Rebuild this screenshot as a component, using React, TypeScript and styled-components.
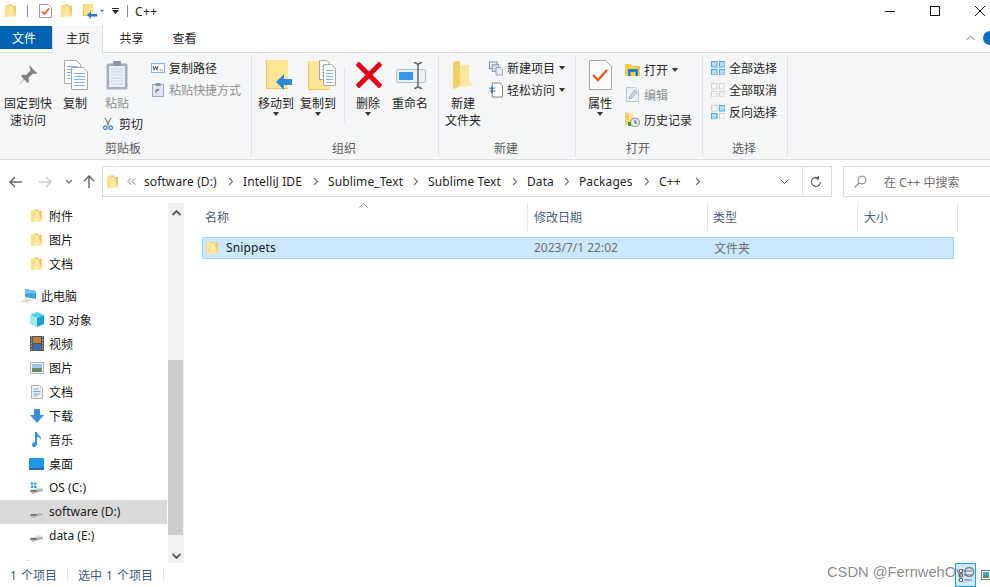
import React from "react";
import styled, { createGlobalStyle } from "styled-components";

const Global = createGlobalStyle`
  html, body { margin: 0; padding: 0; background: #fff; }
  body { font-family: "Noto Sans", "Noto Sans CJK SC", sans-serif; font-size: 12px; color: #1a1a1a; }
`;

const Page = styled.div`
  position: relative;
  width: 990px;
  height: 587px;
  overflow: hidden;
  display: flex;
  flex-direction: column;
  background: #fff;
`;

/* ---------- title bar ---------- */
const TitleBar = styled.div`
  height: 26px;
  flex: none;
  display: flex;
  align-items: center;
  padding: 0 5px 4px;
  box-sizing: border-box;
`;
const QuickSep = styled.span<{ $ml?: number }>`
  width: 1px;
  height: 12px;
  background: #8a8a8a;
  margin: 0 11px 0 ${(p) => p.$ml ?? 11}px;
`;
const TitleText = styled.span`
  font-size: 12px;
  margin-left: -4px;
  color: #222;
  letter-spacing: 0.4px;
`;
const WindowControls = styled.div`
  margin-left: auto;
  display: flex;
  gap: 35px;
  align-items: center;
`;

/* ---------- tabs ---------- */
const TabRow = styled.div`
  height: 27px;
  flex: none;
  display: flex;
  box-sizing: border-box;
  border-bottom: 1px solid #dadbdc;
  position: relative;
`;
const FileTab = styled.div`
  width: 52px;
  height: 23px;
  box-sizing: border-box;
  padding-right: 4px;
  padding-top: 1px;
  background: #0063b1;
  color: #fff;
  display: flex;
  align-items: center;
  justify-content: center;
`;
const Tab = styled.div<{ $active?: boolean }>`
  width: ${(p) => (p.$active ? 51 : 53)}px;
  height: ${(p) => (p.$active ? 27 : 24)}px;
  display: flex;
  align-items: center;
  justify-content: center;
  box-sizing: border-box;
  color: #262626;
  padding-left: ${(p) => (p.$active ? 1 : 4)}px;
  ${(p) =>
    p.$active &&
    `background:#f5f6f7;border:1px solid #dadbdc;border-bottom:none;border-top:none;padding-bottom:3px;`}
`;
const RibbonToggle = styled.div`
  margin-left: auto;
  display: flex;
  align-items: center;
  gap: 8px;
  height: 24px;
  margin-right: -7px;
`;
const HelpDot = styled.span`
  width: 14px;
  height: 14px;
  border-radius: 50%;
  background: #0a6cc4;
`;

/* ---------- ribbon ---------- */
const Ribbon = styled.div`
  height: 107px;
  flex: none;
  display: flex;
  box-sizing: border-box;
  background: #f5f6f7;
  border-bottom: 1px solid #dadbdc;
  padding-top: 2px;
`;
const Group = styled.div<{ $w: number; $pad: number }>`
  width: ${(p) => p.$w}px;
  height: 102px;
  box-sizing: border-box;
  border-right: 1px solid #e1e3e6;
  padding-left: ${(p) => p.$pad}px;
  display: flex;
  flex-direction: column;
`;
const GroupBody = styled.div`
  flex: 1;
  display: flex;
  align-items: flex-start;
  min-height: 0;
`;
const GroupLabel = styled.div<{ $x: number }>`
  height: 20px;
  line-height: 20px;
  margin-bottom: -2px;
  padding-left: ${(p) => p.$x}px;
  color: #5c5c5c;
`;
const Large = styled.div<{ $w: number; $ml?: number; $off?: boolean }>`
  width: ${(p) => p.$w}px;
  margin-left: ${(p) => p.$ml ?? 0}px;
  flex: none;
  display: flex;
  flex-direction: column;
  align-items: center;
  color: ${(p) => (p.$off ? "#8f8f8f" : "#262626")};
  line-height: 17px;
  text-align: center;
`;
const LargeIcon = styled.div<{ $nudge?: number }>`
  height: 40px;
  display: flex;
  align-items: center;
  justify-content: center;
  margin-left: ${(p) => p.$nudge ?? 0}px;
`;
const Caret = styled.span`
  width: 0;
  height: 0;
  border-left: 3.5px solid transparent;
  border-right: 3.5px solid transparent;
  border-top: 4px solid #333;
`;
const InlineCaret = styled(Caret)`
  margin: 0;
`;
const Column = styled.div<{ $ml?: number }>`
  display: flex;
  flex-direction: column;
  margin-left: ${(p) => p.$ml ?? 0}px;
  padding-top: 2px;
`;
const SmallRow = styled.div<{ $h?: number; $off?: boolean }>`
  height: ${(p) => p.$h ?? 22}px;
  display: flex;
  align-items: center;
  gap: 4px;
  white-space: nowrap;
  color: ${(p) => (p.$off ? "#8f8f8f" : "#262626")};
`;
const IconSlot = styled.span<{ $w: number }>`
  width: ${(p) => p.$w}px;
  display: flex;
  justify-content: center;
  flex: none;
`;
const PasteStack = styled.div`
  margin-left: 10px;
  width: 42px;
  display: flex;
  flex-direction: column;
  margin-right: 7px;
`;
const CutRow = styled.div`
  display: flex;
  align-items: center;
  gap: 6px;
  margin-top: 2px;
  padding-left: 2px;
  white-space: nowrap;
  color: #262626;
  height: 20px;
`;
const VertRule = styled.span`
  width: 1px;
  height: 54px;
  margin: 13px 0 0 8px;
  background: #e1e3e6;
  flex: none;
`;

/* ---------- address row ---------- */
const AddressRow = styled.div`
  height: 37px;
  flex: none;
  display: flex;
  align-items: flex-start;
  padding-top: 6px;
  box-sizing: border-box;
`;
const NavButtons = styled.div`
  width: 102px;
  height: 31px;
  flex: none;
  display: flex;
  align-items: center;
  padding-left: 9px;
  box-sizing: border-box;
`;
const NavGlyph = styled.span<{ $ml: number }>`
  display: flex;
  margin-left: ${(p) => p.$ml}px;
`;
const AddressBox = styled.div`
  width: 730px;
  height: 31px;
  flex: none;
  box-sizing: border-box;
  border: 1px solid #d9d9d9;
  display: flex;
  align-items: center;
  padding: 0 4px;
`;
const Crumbs = styled.div`
  display: flex;
  align-items: center;
  gap: 8px;
  white-space: nowrap;
  color: #1f1f1f;
  letter-spacing: 0.1px;
`;
const Crumb = styled.span<{ $w: number }>`
  width: ${(p) => p.$w}px;
`;
const AddressEnd = styled.div`
  margin-left: auto;
  display: flex;
  align-items: center;
  height: 100%;
`;
const AddressSep = styled.span`
  width: 1px;
  height: 100%;
  background: #e3e3e3;
  margin: 0 2px 0 13px;
`;
const SearchBox = styled.div`
  margin-left: 11px;
  flex: 1;
  height: 31px;
  box-sizing: border-box;
  border: 1px solid #d9d9d9;
  border-right: none;
  display: flex;
  align-items: center;
  gap: 17px;
  padding-left: 10px;
  color: #6d6d6d;
`;

/* ---------- body ---------- */
const Body = styled.div`
  flex: 1;
  min-height: 0;
  display: flex;
`;
const NavPane = styled.div`
  width: 168px;
  height: 364px;
  flex: none;
  overflow: hidden;
  padding-top: 7px;
  box-sizing: border-box;
`;
const NavRow = styled.div<{ $indent: number; $selected?: boolean; $gap?: boolean }>`
  height: 24px;
  display: flex;
  align-items: center;
  padding-left: ${(p) => p.$indent}px;
  padding-bottom: 1px;
  margin-top: ${(p) => (p.$gap ? 8 : 0)}px;
  width: 167px;
  box-sizing: border-box;
  color: #1a1a1a;
  white-space: nowrap;
  background: ${(p) => (p.$selected ? "#d9d9d9" : "transparent")};
`;
const NavIcon = styled.span<{ $w: number; $mr: number }>`
  width: ${(p) => p.$w}px;
  margin-right: ${(p) => p.$mr}px;
  display: flex;
  justify-content: center;
  flex: none;
`;
const ScrollBar = styled.div`
  width: 16px;
  flex: none;
  margin-top: 6px;
  background: #f0f0f0;
  display: flex;
  flex-direction: column;
`;
const ScrollBtn = styled.div<{ $h: number; $pt?: number }>`
  height: ${(p) => p.$h}px;
  padding-top: ${(p) => p.$pt ?? 0}px;
  box-sizing: border-box;
  flex: none;
  display: flex;
  align-items: center;
  justify-content: center;
`;
const ScrollTrack = styled.div`
  flex: 1;
  padding-top: 137px;
  box-sizing: border-box;
`;
const ScrollThumb = styled.div`
  width: 15px;
  height: 175px;
  background: #cdcdcd;
`;
const FilePane = styled.div`
  flex: 1;
  min-width: 0;
  position: relative;
  padding-top: 6px;
`;
const SortMark = styled.svg`
  position: absolute;
  left: 175px;
  top: 6px;
`;
const HeaderRow = styled.div`
  display: flex;
  height: 28px;
`;
const HeaderCell = styled.div<{ $w: number; $pad: number }>`
  width: ${(p) => p.$w}px;
  box-sizing: border-box;
  padding-left: ${(p) => p.$pad}px;
  border-right: 1px solid #e5e5e5;
  display: flex;
  align-items: center;
  color: #4c607a;
`;
const FileRow = styled.div`
  margin: 6px 0 0 18px;
  width: 752px;
  height: 22px;
  box-sizing: border-box;
  padding-bottom: 1px;
  background: #cce8ff;
  border: 1px solid #99d1ff;
  display: grid;
  grid-template-columns: 331px 180px 1fr;
  align-items: center;
`;
const FileName = styled.div`
  display: flex;
  align-items: center;
  gap: 8px;
  padding-left: 4px;
  color: #1a1a1a;
  letter-spacing: 0.15px;
`;
const FileMeta = styled.div`
  color: #6d6d6d;
`;

/* ---------- status bar ---------- */
const StatusBar = styled.div`
  height: 24px;
  flex: none;
  display: flex;
  align-items: center;
  padding-left: 10px;
  color: #3e5a78;
  word-spacing: 1px;
`;
const StatusSep = styled.span`
  width: 1px;
  height: 12px;
  background: #e3e3e3;
  margin: 0 10px;
`;
const ViewButtons = styled.div`
  margin-left: auto;
  display: flex;
  align-items: center;
  gap: 5px;
  margin-right: -1px;
`;
const ViewToggle = styled.div`
  width: 21px;
  height: 24px;
  box-sizing: border-box;
  border: 1px solid #26a0da;
  background: #cce8ff;
  display: flex;
  align-items: center;
  justify-content: center;
`;
const Watermark = styled.div`
  position: absolute;
  left: 827px;
  top: 563px;
  font-family: "Liberation Sans", Arial, sans-serif;
  font-size: 14.7px;
  line-height: 18px;
  color: rgba(90, 90, 90, 0.72);
  white-space: nowrap;
`;

/* ---------- drawings ---------- */
const Folder = ({ h = 14 }: { h?: number }) => (
  <svg width={(h * 11) / 14} height={h} viewBox="0 0 11 14">
    <path d="M0 1.5 4 .5h3l1 1.5h3v9.5H3z" fill="#f1c95f" />
    <path d="M0 1.5 4 .5v2h4v2l3 7v1H3.5L0 13.5z" fill="#fde08a" />
    <path d="M4 2.5h4v9l3 .5H3.5L4 11z" fill="#ffe9a6" />
  </svg>
);
const TaskIcon = () => (
  <svg width="13" height="14" viewBox="0 0 13 14">
    <path d="M.5.5h9l3 3v10H.5z" fill="#fff" stroke="#9a9a9a" />
    <path d="m3 7.5 2.3 2.5L10 4.5" fill="none" stroke="#e8541e" strokeWidth="1.6" />
  </svg>
);
const FolderArrowSmall = () => (
  <svg width="15" height="15" viewBox="0 0 15 15">
    <path d="M0 0h10v12H0z" fill="#fde08a" />
    <path d="M0 0h1v12H0zM0 11h10v1H0z" fill="#eec55c" />
    <path d="M4 11 8 7.5V10h6v2.5H8V15z" fill="#1f79c9" />
  </svg>
);
const TinyCaret = () => (
  <svg width="7" height="4" viewBox="0 0 7 4">
    <path d="M0 0h7L3.5 4z" fill="#4a7ab0" />
  </svg>
);
const CustomizeMark = () => (
  <svg width="7" height="6" viewBox="0 0 7 6">
    <path d="M0 0h7v1H0zM0 2h7L3.5 6z" fill="#222" />
  </svg>
);
const Minimize = () => (
  <svg width="10" height="10" viewBox="0 0 10 10"><path d="M0 5.5h10" stroke="#111" /></svg>
);
const Maximize = () => (
  <svg width="10" height="10" viewBox="0 0 10 10"><rect x=".5" y=".5" width="9" height="9" fill="none" stroke="#111" /></svg>
);
const CloseMark = () => (
  <svg width="10" height="10" viewBox="0 0 10 10"><path d="m0 0 10 10M10 0 0 10" stroke="#111" /></svg>
);
const Chevron = ({ dir, color = "#9a9a9a", weight = 1.2 }: { dir: "up" | "down"; color?: string; weight?: number }) => (
  <svg width="9" height="6" viewBox="0 0 9 6">
    <path d={dir === "up" ? "m.5 5 4-4 4 4" : "m.5 1 4 4 4-4"} fill="none" stroke={color} strokeWidth={weight} />
  </svg>
);
const Pin = () => (
  <svg width="22" height="23" viewBox="0 0 22 23">
    <path d="M13 1 21 9l-2 1-2-.5-4.500 4.500.5 3.500-1.500 1.500L5 12l1.500-1.500 3.500.5L14.500 6.500 14 4.500z" fill="#7f8082" />
    <path d="M7.500 15 1 22l7-6z" fill="#a3a4a6" />
  </svg>
);
const DocLines = ({ x, y, w, h }: { x: number; y: number; w: number; h: number }) => (
  <g>
    <path d={`M${x + 0.5} ${y + 0.5}h${w - 5}l4 4v${h - 4}h-${w - 1}z`} fill="#fff" stroke="#a8a8a8" />
    {[6, 9, 12, 15, 18].filter((o) => o < h - 1).map((o) => (
      <path key={o} d={`M${x + 3} ${y + o + 0.5}h${w - 6}`} stroke="#7db4ea" />
    ))}
  </g>
);
const CopyDocs = () => (
  <svg width="24" height="30" viewBox="0 0 24 30">
    <DocLines x={0} y={0} w={17} h={23} />
    <DocLines x={7} y={7} w={17} h={22} />
  </svg>
);
const Clipboard = () => (
  <svg width="22" height="30" viewBox="0 0 22 30">
    <rect x=".5" y="3.500" width="21" height="26" rx="1.500" fill="#a3adbc" />
    <rect x="3" y="6" width="16" height="21" fill="#e9edf4" />
    {[9, 12, 15, 18, 21, 24].map((y) => <path key={y} d={`M5 ${y}h12`} stroke="#cfd7e4" />)}
    <rect x="7" y="1" width="8" height="5" rx="1" fill="#8c96a6" />
  </svg>
);
const PathIcon = () => (
  <svg width="14" height="10" viewBox="0 0 14 10">
    <rect x=".5" y=".5" width="13" height="9" fill="#fff" stroke="#8fb4d9" />
    <path d="m2 3 1.200 4L4.500 3.500 5.800 7 7 3" fill="none" stroke="#2c5a8c" />
    <path d="M9 7h1M11 7h1" stroke="#555" />
  </svg>
);
const ShortcutIcon = () => (
  <svg width="12" height="14" viewBox="0 0 12 14">
    <rect x=".5" y="1.500" width="11" height="12" fill="#dfe4ec" stroke="#a3adbc" />
    <rect x="3.500" y="0" width="5" height="3" fill="#8c96a6" />
    <path d="M4 10V7h3M5 8l2-2" fill="none" stroke="#5d6f88" />
  </svg>
);
const Scissors = () => (
  <svg width="11" height="14" viewBox="0 0 11 14">
    <path d="m2 0 4.500 8M9 0 4.500 8" stroke="#777" strokeWidth="1.200" fill="none" />
    <circle cx="2.600" cy="11" r="2" fill="none" stroke="#2f7fc8" strokeWidth="1.300" />
    <circle cx="8.400" cy="11" r="2" fill="none" stroke="#2f7fc8" strokeWidth="1.300" />
  </svg>
);
const MoveTo = () => (
  <svg width="26" height="30" viewBox="0 0 26 30">
    <path d="M0 0h22v29H0z" fill="#ffe697" />
    <path d="M0 0h1v29H0zM0 28h22v1H0z" fill="#eec55c" />
    <path d="M10 22 18 14v5h8v6h-8v5z" fill="#2c8ad9" />
  </svg>
);
const CopyTo = () => (
  <svg width="28" height="30" viewBox="0 0 28 30">
    <path d="M0 1h22v29H0z" fill="#ffe697" />
    <path d="M0 1h1v29H0zM0 29h22v1H0z" fill="#eec55c" />
    <DocLines x={11} y={0} w={12} h={19} />
    <DocLines x={15} y={4} w={13} h={21} />
  </svg>
);
const DeleteMark = () => (
  <svg width="26" height="26" viewBox="0 0 26 26">
    <path d="M3 3 23 23M23 3 3 23" stroke="#e2001a" strokeWidth="5" strokeLinecap="square" />
  </svg>
);
const RenameMark = () => (
  <svg width="30" height="27" viewBox="0 0 30 27">
    <rect x=".5" y="7.500" width="29" height="13" rx="1.500" fill="#eef1f4" stroke="#b4bac0" />
    <rect x="3" y="10" width="14" height="8" fill="#3a96e6" />
    <path d="M18 .5c2 0 3 1 4 2 1-1 2-2 4-2M22 2.500v22M18 26.500c2 0 3-1 4-2 1 1 2 2 4 2" fill="none" stroke="#555" strokeWidth="1.300" />
  </svg>
);
const NewFolder = () => (
  <svg width="20" height="28" viewBox="0 0 20 28">
    <path d="M0 1 7 0v4h9v17l4 3v1H7l-7 3z" fill="#fbdc8a" />
    <path d="M7 4h9v17l4 4H7z" fill="#ffe79f" />
    <path d="M0 1 7 0v25l-7 3z" fill="#f3cd6a" />
  </svg>
);
const NewItem = () => (
  <svg width="15" height="15" viewBox="0 0 15 15">
    <rect x=".5" y=".5" width="8" height="7" fill="#eef4fb" stroke="#6b8aa8" />
    <rect x="3.500" y="3.500" width="7" height="7" fill="#cfe2f6" stroke="#7c8ea0" />
    <path d="M7.500 6.500h5l2 2v6h-7z" fill="#e9edf2" stroke="#8d98a4" />
  </svg>
);
const EasyAccess = () => (
  <svg width="15" height="16" viewBox="0 0 15 16">
    <path d="M3.500.5h8l3 3v12h-11z" fill="#fff" stroke="#777" />
    <path d="M0 6h7M1 9h6M3 4v8" fill="none" stroke="#1d6aa8" />
  </svg>
);
const Properties = () => (
  <svg width="23" height="30" viewBox="0 0 23 30">
    <path d="M.5.5h16l6 6v23H.500z" fill="#fbfbfb" stroke="#a5a5a5" />
    <path d="m4 15 5 5 9-10" fill="none" stroke="#e8591c" strokeWidth="2.400" />
  </svg>
);
const OpenIcon = () => (
  <svg width="15" height="13" viewBox="0 0 15 13">
    <path d="M0 1h6l1 2h8v10H0z" fill="#f7c948" />
    <path d="M3 6h10v7h-2.500V9h-5v4H3z" fill="#1e7fd0" />
  </svg>
);
const EditIcon = () => (
  <svg width="13" height="15" viewBox="0 0 13 15">
    <path d="M.5.5h9l3 3v11H.5z" fill="#edf1f6" stroke="#bcc6d2" />
    <path d="m3 12 1-3 5-6 2 2-5 6z" fill="#c6d6e8" stroke="#a4b8ce" />
  </svg>
);
const HistoryIcon = () => (
  <svg width="15" height="15" viewBox="0 0 15 15">
    <path d="M0 0 4 1v10l-4 3z" fill="#f3cd6a" />
    <path d="M4 1h4v9H4z" fill="#ffe79f" />
    <circle cx="10" cy="10.500" r="4.500" fill="#e6e6e6" stroke="#888" />
    <path d="M10 8v3h2" fill="none" stroke="#555" />
    <path d="M3 10h3v4H3z" fill="#3a9a3a" />
  </svg>
);
const Tile = ({ on }: { on: boolean[] }) => (
  <svg width="14" height="14" viewBox="0 0 14 14">
    {[[0, 0], [8, 0], [0, 8], [8, 8]].map(([x, y], i) => (
      <rect
        key={i}
        x={x + 0.5}
        y={y + 0.5}
        width="5.500"
        height="5.500"
        fill={on[i] ? "#b5dcfa" : "#f5f5f5"}
        stroke={on[i] ? "#4ea6ea" : "#d0d0d0"}
      />
    ))}
  </svg>
);
const ArrowLeft = ({ color }: { color: string }) => (
  <svg width="13" height="12" viewBox="0 0 13 12">
    <path d="M6 1 1 6l5 5M1 6h12" fill="none" stroke={color} strokeWidth="1.500" />
  </svg>
);
const ArrowUp = () => (
  <svg width="12" height="13" viewBox="0 0 12 13">
    <path d="M1 6l5-5 5 5M6 1v12" fill="none" stroke="#6b6b6b" strokeWidth="1.500" />
  </svg>
);
const CrumbArrow = () => (
  <svg width="9" height="9" viewBox="0 0 9 9">
    <path d="m3 1 3.500 3.500L3 8" fill="none" stroke="#6e6e6e" strokeWidth="1.100" />
  </svg>
);
const DoubleLeft = () => (
  <svg width="9" height="9" viewBox="0 0 9 9">
    <path d="M4 1.500 1 4.500l3 3M8 1.500l-3 3 3 3" fill="none" stroke="#6e6e6e" />
  </svg>
);
const Refresh = () => (
  <svg width="12" height="12" viewBox="0 0 12 12">
    <path d="M10.500 6A4.500 4.500 0 1 1 8.500 2.200M8.500 0v3h-3" fill="none" stroke="#555" strokeWidth="1.100" />
  </svg>
);
const Magnifier = () => (
  <svg width="13" height="13" viewBox="0 0 13 13">
    <circle cx="8" cy="5" r="4" fill="none" stroke="#8a8a8a" />
    <path d="M5 8 .5 12.500" stroke="#8a8a8a" strokeWidth="1.200" />
  </svg>
);
const Drive = ({ win }: { win?: boolean }) => (
  <svg width="15" height="12" viewBox="0 0 16 12">
    <path d="M1 8 12 5l3 2v2L4 12 1 10z" fill="#dcdcdc" />
    <path d="M1 8h3l11-1v2L4 12 1 10z" fill="#b0b0b0" />
    <path d="M2 9h6" stroke="#444" />
    {win && <path d="M2 0h2.500v2.500H2zM5.500 0H8v2.500H5.500zM2 3.500h2.500V6H2zM5.500 3.500H8V6H5.500z" fill="#19a2de" />}
  </svg>
);
const PcIcon = () => (
  <svg width="17" height="16" viewBox="0 0 17 16">
    <path d="M5 1 16 3v8L5 9z" fill="#36a3ec" />
    <path d="M5 1 16 3v2L5 6z" fill="#71c3f5" />
    <path d="M0 14 7 10l6 2-6 3z" fill="#dcdcdc" />
  </svg>
);
const Cube = () => (
  <svg width="14" height="15" viewBox="0 0 14 15">
    <path d="M7 0 14 3 7 6 0 3z" fill="#55d0ea" />
    <path d="M0 3 7 6v9l-7-3z" fill="#a5e8f1" />
    <path d="M14 3 7 6v9l7-3z" fill="#19a2d6" />
  </svg>
);
const Film = () => (
  <svg width="14" height="15" viewBox="0 0 14 15">
    <rect width="14" height="15" fill="#555" />
    <rect x="3" y="1" width="8" height="6" fill="#b6803a" />
    <rect x="3" y="8" width="8" height="6" fill="#3d6ea8" />
    {[1, 4, 7, 10, 13].map((y) => (
      <path key={y} d={`M1 ${y}h1M12 ${y}h1`} stroke="#ddd" />
    ))}
  </svg>
);
const Picture = () => (
  <svg width="14" height="12" viewBox="0 0 14 12">
    <rect x=".5" y=".5" width="13" height="11" fill="#f4f4f4" stroke="#b5b5b5" />
    <rect x="2" y="2" width="10" height="4" fill="#9cc6ea" />
    <path d="M2 6h10v4H2z" fill="#5f8f6f" />
  </svg>
);
const NavDoc = () => (
  <svg width="12" height="14" viewBox="0 0 12 14">
    <path d="M.5.5h8l3 3v10H.5z" fill="#f2f2f2" stroke="#aeaeae" />
    <path d="M2.500 4h5M2.500 6.500h7M2.500 9h7M2.500 11h4" stroke="#7fa3c6" />
  </svg>
);
const Download = () => (
  <svg width="14" height="14" viewBox="0 0 14 14">
    <path d="M4 0h6v6h4l-7 8-7-8h4z" fill="#3c8fe0" />
  </svg>
);
const Note = () => (
  <svg width="10" height="15" viewBox="0 0 10 15">
    <path d="M3 0h2c0 3 5 4 4 8-.5-2-2-3-4-3.500V12c0 2-1.500 3-3 3S0 14 0 12.500 1.500 10 3 10z" fill="#2b95e4" />
  </svg>
);
const Desktop = () => (
  <svg width="15" height="12" viewBox="0 0 15 12">
    <rect width="15" height="11" rx="1" fill="#1f96ea" />
    <rect y="10" width="15" height="2" fill="#2d6aa0" />
  </svg>
);
const Globe = () => (
  <svg width="15" height="15" viewBox="0 0 15 15">
    <circle cx="7.500" cy="7.500" r="7" fill="#6aa7d6" />
  </svg>
);
const Details = () => (
  <svg width="13" height="13" viewBox="0 0 13 13">
    <path d="M.5.5h3v3h-3zM.5 9.500h3v3h-3z" fill="#fff" stroke="#666" />
    <path d="M5 2h8M5 6h8M5 11h8" stroke="#777" />
    <path d="M.5 5h3v3h-3z" fill="#fff" stroke="#666" />
  </svg>
);
const Thumb = () => (
  <svg width="10" height="10" viewBox="0 0 10 10">
    <rect x=".5" y=".5" width="9" height="9" fill="#fff" stroke="#777" />
    <rect x="2" y="2" width="6" height="3" fill="#4aa2e6" />
    <rect x="2" y="5" width="6" height="3" fill="#5f8f6f" />
  </svg>
);

type NavEntry = { label: string; icon: React.ReactNode; top?: boolean; selected?: boolean; gap?: boolean };
const navEntries: NavEntry[] = [
  { label: "附件", icon: <Folder /> },
  { label: "图片", icon: <Folder /> },
  { label: "文档", icon: <Folder /> },
  { label: "此电脑", icon: <PcIcon />, top: true, gap: true },
  { label: "3D 对象", icon: <Cube /> },
  { label: "视频", icon: <Film /> },
  { label: "图片", icon: <Picture /> },
  { label: "文档", icon: <NavDoc /> },
  { label: "下载", icon: <Download /> },
  { label: "音乐", icon: <Note /> },
  { label: "桌面", icon: <Desktop /> },
  { label: "OS (C:)", icon: <Drive win /> },
  { label: "software (D:)", icon: <Drive />, selected: true },
  { label: "data (E:)", icon: <Drive /> },
  { label: "网络", icon: <Globe />, top: true, gap: true },
];

const crumbs: [string, number][] = [
  ["software (D:)", 74],
  ["IntelliJ IDE", 60],
  ["Sublime_Text", 75],
  ["Sublime Text", 74],
  ["Data", 27],
  ["Packages", 55],
  ["C++", 26],
];

export default function App() {
  return (
    <Page>
      <Global />
      <TitleBar>
        <Folder />
        <QuickSep />
        <TaskIcon />
        <IconSlot $w={28}><Folder /></IconSlot>
        <IconSlot $w={20}><FolderArrowSmall /></IconSlot>
        <IconSlot $w={4}><TinyCaret /></IconSlot>
        <IconSlot $w={22}><CustomizeMark /></IconSlot>
        <QuickSep $ml={1} />
        <TitleText>C++</TitleText>
        <WindowControls>
          <Minimize />
          <Maximize />
          <CloseMark />
        </WindowControls>
      </TitleBar>

      <TabRow>
        <FileTab>文件</FileTab>
        <Tab $active>主页</Tab>
        <Tab>共享</Tab>
        <Tab>查看</Tab>
        <RibbonToggle>
          <Chevron dir="up" color="#b0b0b0" />
          <HelpDot />
        </RibbonToggle>
      </TabRow>

      <Ribbon>
        <Group $w={252} $pad={4}>
          <GroupBody>
            <Large $w={48}>
              <LargeIcon $nudge={-2}><Pin /></LargeIcon>
              固定到快<br />速访问
            </Large>
            <Large $w={32} $ml={7}>
              <LargeIcon $nudge={2}><CopyDocs /></LargeIcon>
              复制
            </Large>
            <PasteStack>
              <Large $w={32} $off>
                <LargeIcon><Clipboard /></LargeIcon>
                粘贴
              </Large>
              <CutRow>
                <Scissors />
                剪切
              </CutRow>
            </PasteStack>
            <Column>
              <SmallRow><IconSlot $w={15}><PathIcon /></IconSlot>复制路径</SmallRow>
              <SmallRow $off><IconSlot $w={15}><ShortcutIcon /></IconSlot>粘贴快捷方式</SmallRow>
            </Column>
          </GroupBody>
          <GroupLabel $x={101}>剪贴板</GroupLabel>
        </Group>

        <Group $w={187} $pad={6}>
          <GroupBody>
            <Large $w={36}>
              <LargeIcon $nudge={6}><MoveTo /></LargeIcon>
              移动到
              <Caret />
            </Large>
            <Large $w={36} $ml={6}>
              <LargeIcon $nudge={8}><CopyTo /></LargeIcon>
              复制到
              <Caret />
            </Large>
            <VertRule />
            <Large $w={24} $ml={11}>
              <LargeIcon $nudge={2}><DeleteMark /></LargeIcon>
              删除
              <Caret />
            </Large>
            <Large $w={36} $ml={12}>
              <LargeIcon $nudge={2}><RenameMark /></LargeIcon>
              重命名
            </Large>
          </GroupBody>
          <GroupLabel $x={74}>组织</GroupLabel>
        </Group>

        <Group $w={137} $pad={6}>
          <GroupBody>
            <Large $w={36}>
              <LargeIcon><NewFolder /></LargeIcon>
              新建<br />文件夹
            </Large>
            <Column $ml={8}>
              <SmallRow><IconSlot $w={14}><NewItem /></IconSlot>新建项目<InlineCaret /></SmallRow>
              <SmallRow><IconSlot $w={14}><EasyAccess /></IconSlot>轻松访问<InlineCaret /></SmallRow>
            </Column>
          </GroupBody>
          <GroupLabel $x={49}>新建</GroupLabel>
        </Group>

        <Group $w={127} $pad={12}>
          <GroupBody>
            <Large $w={24}>
              <LargeIcon><Properties /></LargeIcon>
              属性
              <Caret />
            </Large>
            <Column $ml={13}>
              <SmallRow $h={25}><IconSlot $w={15}><OpenIcon /></IconSlot>打开<InlineCaret /></SmallRow>
              <SmallRow $h={25} $off><IconSlot $w={15}><EditIcon /></IconSlot>编辑</SmallRow>
              <SmallRow $h={25}><IconSlot $w={15}><HistoryIcon /></IconSlot>历史记录</SmallRow>
            </Column>
          </GroupBody>
          <GroupLabel $x={38}>打开</GroupLabel>
        </Group>

        <Group $w={85} $pad={8}>
          <GroupBody>
            <Column>
              <SmallRow><IconSlot $w={14}><Tile on={[true, true, true, true]} /></IconSlot>全部选择</SmallRow>
              <SmallRow><IconSlot $w={14}><Tile on={[false, false, false, false]} /></IconSlot>全部取消</SmallRow>
              <SmallRow><IconSlot $w={14}><Tile on={[false, true, true, false]} /></IconSlot>反向选择</SmallRow>
            </Column>
          </GroupBody>
          <GroupLabel $x={21}>选择</GroupLabel>
        </Group>
      </Ribbon>

      <AddressRow>
        <NavButtons>
          <ArrowLeft color="#6b6b6b" />
          <NavGlyph $ml={17}>
            <svg width="13" height="12" viewBox="0 0 13 12">
              <path d="m7 1 5 5-5 5M12 6H0" fill="none" stroke="#c9c9c9" strokeWidth="1.500" />
            </svg>
          </NavGlyph>
          <NavGlyph $ml={13}>
            <svg width="8" height="5" viewBox="0 0 8 5">
              <path d="m1 1 3 3 3-3" fill="none" stroke="#6b6b6b" strokeWidth="1.200" />
            </svg>
          </NavGlyph>
          <NavGlyph $ml={10}><ArrowUp /></NavGlyph>
        </NavButtons>
        <AddressBox>
          <Crumbs>
            <Folder />
            <IconSlot $w={10}><DoubleLeft /></IconSlot>
            {crumbs.map(([name, w]) => (
              <React.Fragment key={name}>
                <Crumb $w={w}>{name}</Crumb>
                <CrumbArrow />
              </React.Fragment>
            ))}
          </Crumbs>
          <AddressEnd>
            <svg width="9" height="5" viewBox="0 0 9 5">
              <path d="m.5.500 4 4 4-4" fill="none" stroke="#555" />
            </svg>
            <AddressSep />
            <IconSlot $w={22}><Refresh /></IconSlot>
          </AddressEnd>
        </AddressBox>
        <SearchBox>
          <Magnifier />
          在 C++ 中搜索
        </SearchBox>
      </AddressRow>

      <Body>
        <NavPane>
          {navEntries.map((e, i) => (
            <NavRow key={i} $indent={e.top ? 20 : 29} $selected={e.selected} $gap={e.gap}>
              <NavIcon $w={e.top ? 17 : 15} $mr={e.top ? 4 : 5}>{e.icon}</NavIcon>
              {e.label}
            </NavRow>
          ))}
        </NavPane>
        <ScrollBar>
          <ScrollBtn $h={20}><Chevron dir="up" color="#555" weight={1.8} /></ScrollBtn>
          <ScrollTrack><ScrollThumb /></ScrollTrack>
          <ScrollBtn $h={28} $pt={14}><Chevron dir="down" color="#555" weight={1.8} /></ScrollBtn>
        </ScrollBar>
        <FilePane>
          <SortMark width="9" height="5" viewBox="0 0 9 5">
            <path d="m.5 4.500 4-4 4 4" fill="none" stroke="#8a8a8a" />
          </SortMark>
          <HeaderRow>
            <HeaderCell $w={344} $pad={21}>名称</HeaderCell>
            <HeaderCell $w={180} $pad={6}>修改日期</HeaderCell>
            <HeaderCell $w={150} $pad={5}>类型</HeaderCell>
            <HeaderCell $w={100} $pad={6}>大小</HeaderCell>
          </HeaderRow>
          <FileRow>
            <FileName><Folder />Snippets</FileName>
            <FileMeta>2023/7/1 22:02</FileMeta>
            <FileMeta>文件夹</FileMeta>
          </FileRow>
        </FilePane>
      </Body>

      <StatusBar>
        1 个项目
        <StatusSep />
        选中 1 个项目
        <StatusSep />
        <ViewButtons>
          <ViewToggle><Details /></ViewToggle>
          <Thumb />
        </ViewButtons>
      </StatusBar>
      <Watermark>CSDN @FernwehOvO</Watermark>
    </Page>
  );
}
